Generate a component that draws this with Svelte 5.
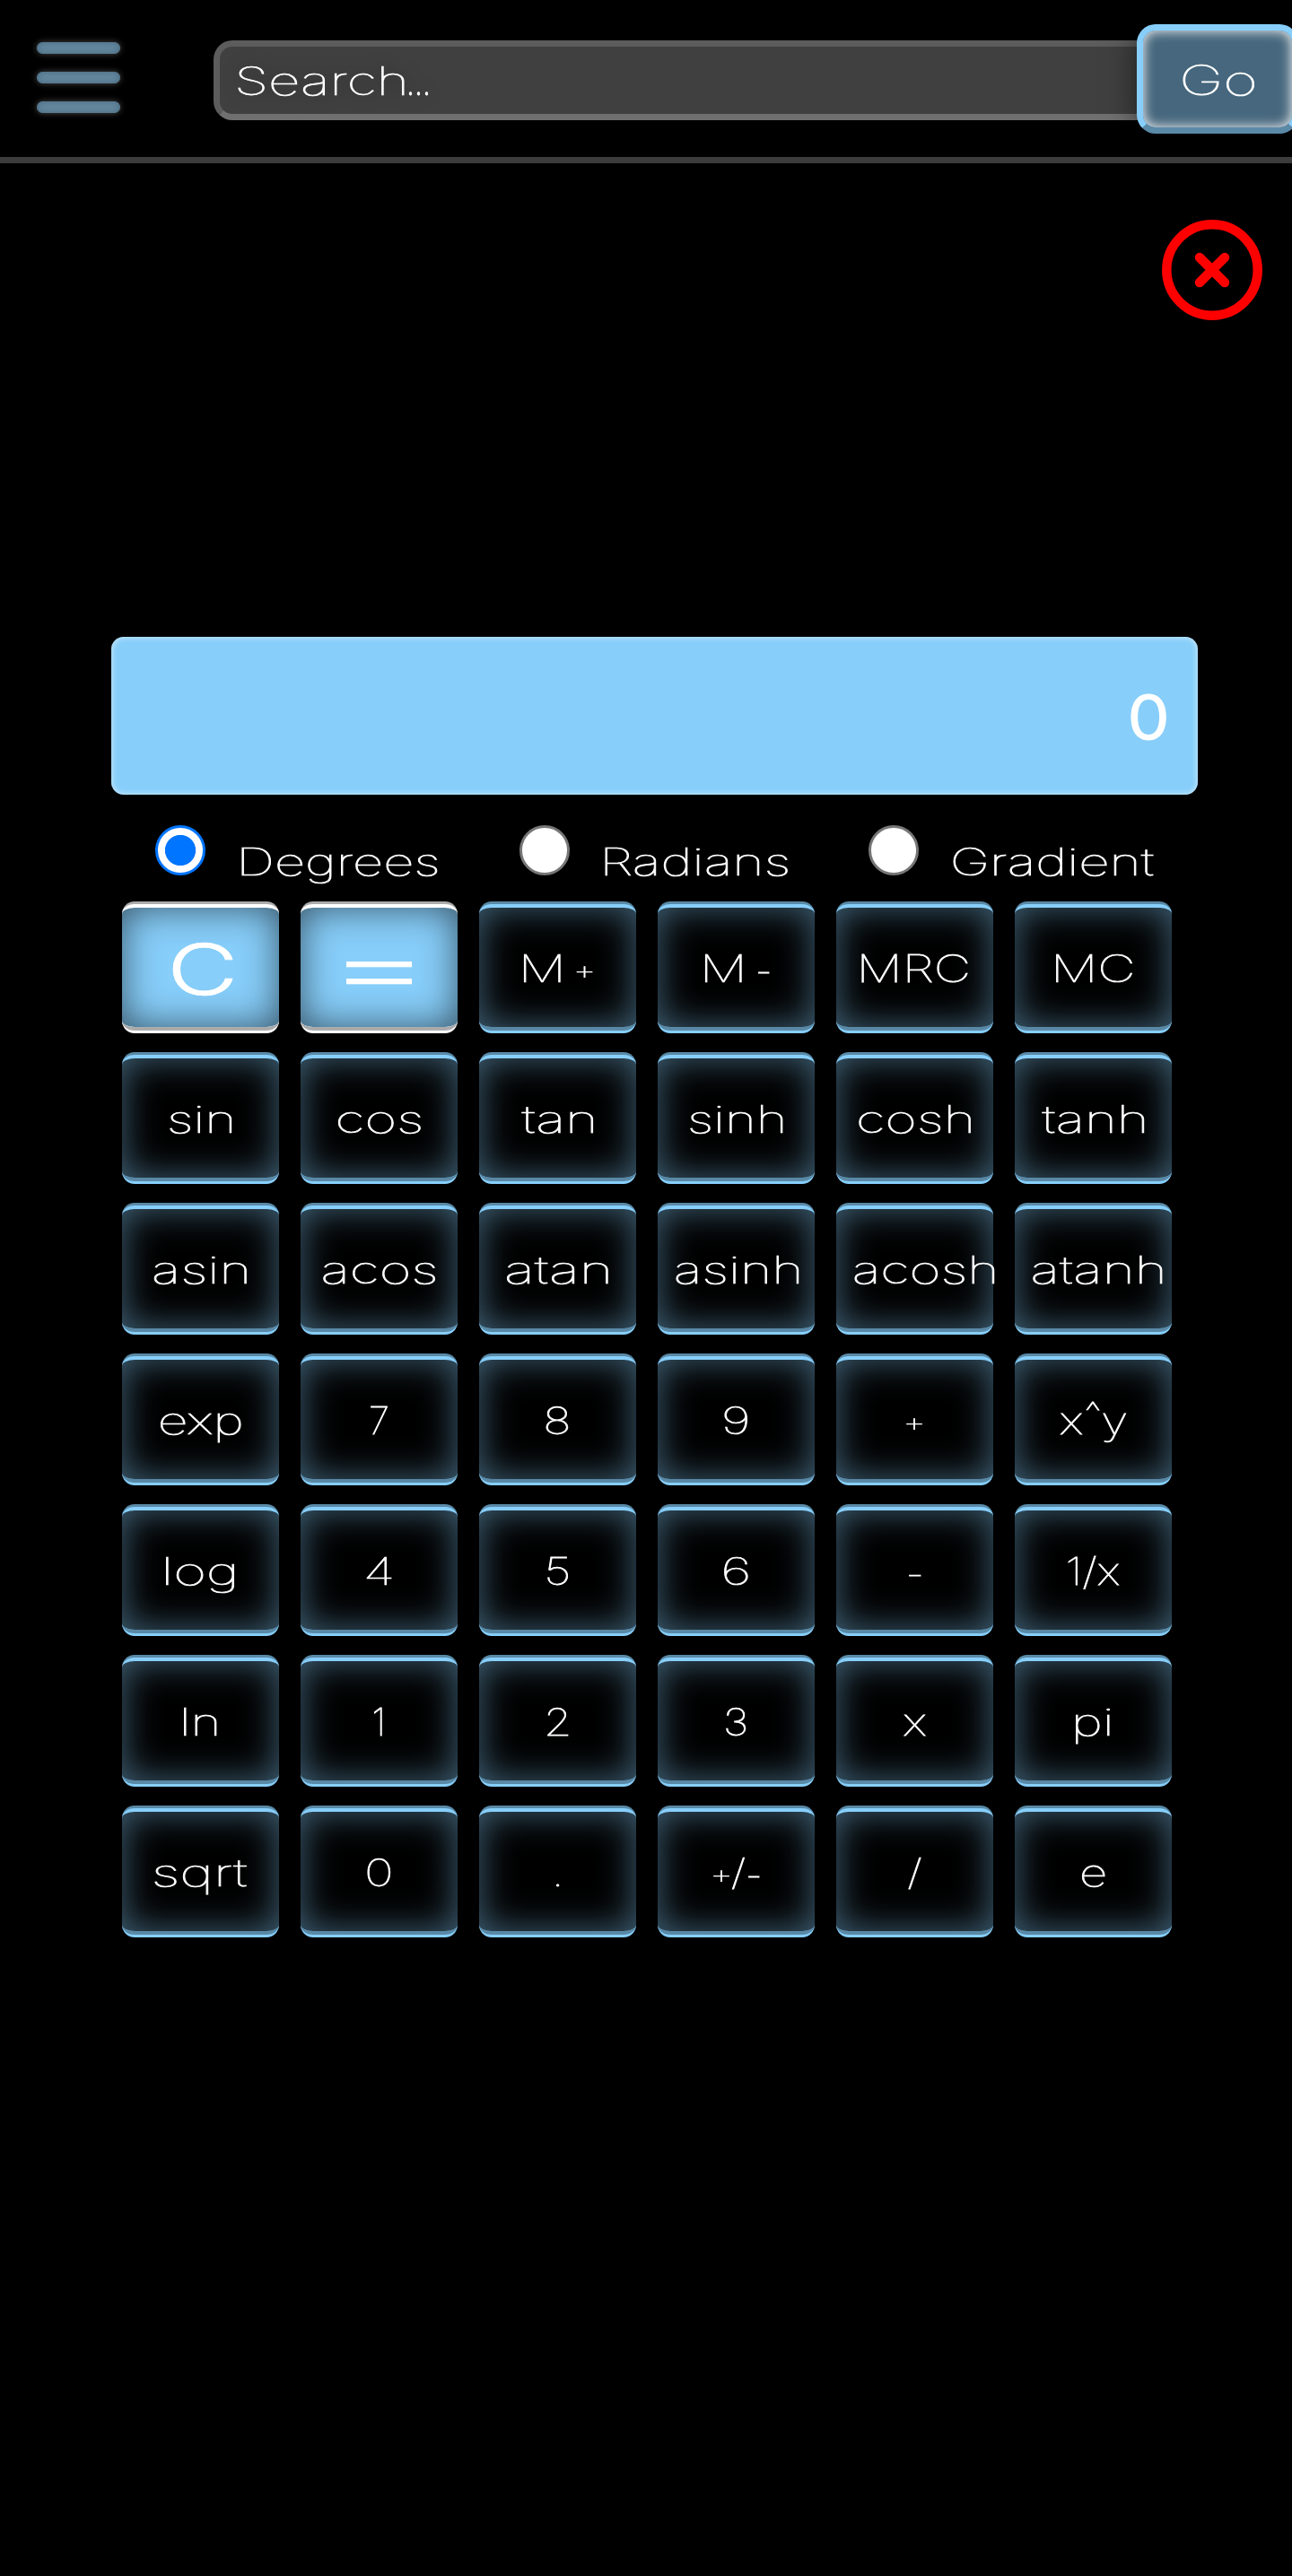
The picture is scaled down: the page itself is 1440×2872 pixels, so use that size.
<script>
  const ctx = document.createElement('canvas').getContext('2d');

  // Scales a run horizontally so that its ink spans exactly `w` pixels from `x`.
  function fit(t, x, w, y, size, weight) {
    ctx.font = `${weight} ${size}px Inter`;
    const m = ctx.measureText(t);
    const ink = m.actualBoundingBoxLeft + m.actualBoundingBoxRight;
    const s = w / ink;
    return `translate(${x + s * m.actualBoundingBoxLeft} ${y}) scale(${s} 1)`;
  }

  // Each key: a list of runs [text, left, width, size, rise]; left is inside the key.
  const c = (t, w, size = 42, rise = 0) => [[t, 87.5 - w / 2, w, size, rise]];
  const keys = [
    [['C', 57, 66, 79, -14, 300]], [['=', 51, 73, 92, -16, 300]],
    [['M', 49.5, 41, 42, 0], ['+', 109, 18, 29, 3]],
    [['M', 52.5, 41, 42, 0], ['-', 112, 12, 42, -3]],
    c('MRC', 119), [['MC', 45.5, 86, 42, 0]],
    c('sin', 70), c('cos', 92), c('tan', 80), c('sinh', 104), c('cosh', 125), c('tanh', 114),
    c('asin', 103), c('acos', 124), c('atan', 113), [['asinh', 20.5, 137, 42, 0]],
    [['acosh', 20.5, 156, 42, 0]], [['atanh', 20.5, 144, 42, 0]],
    c('exp', 90), c('7', 19), c('8', 25), c('9', 25), c('+', 18, 29, 3),
    [['x', 51, 24, 42, 0], ['^', 79.5, 15, 30, 15], ['y', 99, 25, 42, 0]],
    c('log', 76), c('4', 27), c('5', 23), c('6', 26), c('-', 13, 42, -3), c('1/x', 57),
    c('ln', 36), [['1', 81.5, 9, 42, 0]], c('2', 24), c('3', 22), c('x', 24), c('pi', 38),
    c('sqrt', 104), c('0', 25), c('.', 3.5),
    [['+', 62.5, 18, 29, 3], ['/', 83, 14, 40, 1], ['-', 101, 12, 42, -3]],
    c('/', 14, 40, 1), c('e', 26)
  ];
  const modes = [
    ['Degrees', 219, 'deg'],
    ['Radians', 204.5, 'rad'],
    ['Gradient', 224, 'grad']
  ];
</script>

{#snippet run(t, x, w, y, size, weight)}
  <text
    transform={fit(t, x, w, y, size, weight)}
    font-size={size}
    font-weight={weight}>{t}</text>
{/snippet}

<header>
  <div class="menu"><i></i><i></i><i></i></div>
  <div class="search">
    <svg class="shade" width="240" height="75">{@render run('Search', 20.5, 184.5, 53.5, 43, 100)}{@render run('...', 211, 21, 53.5, 43, 200)}</svg>
  </div>
  <div class="go">
    <svg width="166" height="108">{@render run('Go', 44.5, 79.5, 72, 46, 100)}</svg>
  </div>
</header>

<main>
  <svg class="close" width="112" height="112" viewBox="0 0 112 112">
    <circle cx="56" cy="56" r="50.7" />
    <path d="M42 42L70 70M70 42L42 70" />
  </svg>

  <div class="display">
    <svg width="1211" height="176">{@render run('0', 1137, 38.5, 114, 68, 400)}</svg>
  </div>

  <div class="modes">
    {#each modes as [name, w, id]}
      <div class="mode {id}">
        <span class="radio" class:on={id === 'deg'}></span>
        <svg width={w} height="60">{@render run(name, 0, w - 1, 56, 42, 100)}</svg>
      </div>
    {/each}
  </div>

  <div class="keys">
    {#each keys as runs, i}
      <div class="key" class:lit={i < 2}>
        <svg width="174" height="133">
          {#each runs as [t, x, w, size, rise, weight]}
            {@render run(t, x, w, 82.5 - rise, size, weight ?? 100)}
          {/each}
        </svg>
      </div>
    {/each}
  </div>
</main>

<style>
  :global(body) {
    background: #000;
    overflow-x: hidden;
  }
  svg {
    display: block;
    overflow: visible;
  }
  text {
    font-family: Inter, 'Open Sans', sans-serif;
    fill: #fff;
    stroke: #fff;
    stroke-width: 0.9px;
    vector-effect: non-scaling-stroke;
    white-space: pre;
  }
  header,
  main {
    will-change: transform;
  }
  header {
    box-sizing: border-box;
    width: 1440px;
    height: 182px;
    border-bottom: 7px solid #3c3c3c;
    display: flex;
    align-items: flex-start;
    overflow: hidden;
  }
  .menu {
    display: flex;
    flex: none;
    flex-direction: column;
    gap: 20px;
    width: 92.5px;
    margin: 47px 104.5px 0 41px;
  }
  .menu i {
    height: 13px;
    border-radius: 6.5px;
    background: #64889e;
    box-shadow: 0 0 7px rgba(255, 255, 255, 0.3), inset 0 0 7px rgba(50, 80, 105, 0.6);
  }
  .search {
    box-sizing: border-box;
    flex: none;
    width: 1050px;
    height: 89px;
    margin-top: 45px;
    border: 7px solid #5c5c5c;
    border-bottom-color: #707070;
    border-radius: 21px;
    background: #404040;
  }
  .shade {
    filter: drop-shadow(0 0 10px rgba(0, 0, 0, 0.4));
  }
  .go {
    box-sizing: border-box;
    flex: none;
    width: 180px;
    height: 122px;
    margin: 27px 0 0 -21px;
    border: 7px solid #87cefa;
    border-bottom-color: #5b8aa8;
    border-radius: 21px;
    background: #46677d;
    box-shadow: 0 0 36px rgba(0, 0, 0, 0.55), inset 0 0 14px #fff;
  }
  main {
    width: 1440px;
    height: 2690px;
    overflow: hidden;
    display: flex;
    flex-direction: column;
    align-items: flex-start;
  }
  .close {
    margin: 63px 0 0 1295px;
  }
  .close circle,
  .close path {
    fill: none;
    stroke: red;
    stroke-width: 10.5;
    stroke-linecap: round;
  }
  .display {
    width: 1211px;
    height: 175.5px;
    margin: 353px 0 0 124px;
    border-radius: 14px;
    background: #87cefa;
    box-shadow: inset 0 0 7px rgba(255, 255, 255, 0.7);
  }
  .modes {
    display: flex;
    height: 119px;
    padding-left: 173px;
  }
  .mode {
    display: flex;
    align-items: flex-start;
    padding-top: 34.5px;
    gap: 38.5px;
  }
  .deg {
    gap: 40px;
    margin-right: 91px;
  }
  .rad {
    margin-right: 90px;
  }
  .radio {
    box-sizing: border-box;
    width: 56px;
    height: 56px;
    border: 3.5px solid #767676;
    border-radius: 50%;
    background: #fff;
  }
  .radio.on {
    border-color: #0075ff;
    background: radial-gradient(circle, #0075ff 16.7px, #fff 17.5px);
  }
  .keys {
    display: grid;
    grid-template-columns: repeat(6, 174.5px);
    grid-auto-rows: 147px;
    gap: 21px 24.5px;
    margin-left: 136px;
  }
  .key {
    box-sizing: border-box;
    border-style: groove;
    border-color: #87cefa;
    border-width: 7px 0;
    border-radius: 14px;
    box-shadow: inset 0 0 42px rgba(135, 206, 250, 0.5);
  }
  .key.lit {
    border-color: #fff;
    background: #87cefa;
    box-shadow: inset 0 0 42px rgba(0, 0, 0, 0.6);
  }
</style>
